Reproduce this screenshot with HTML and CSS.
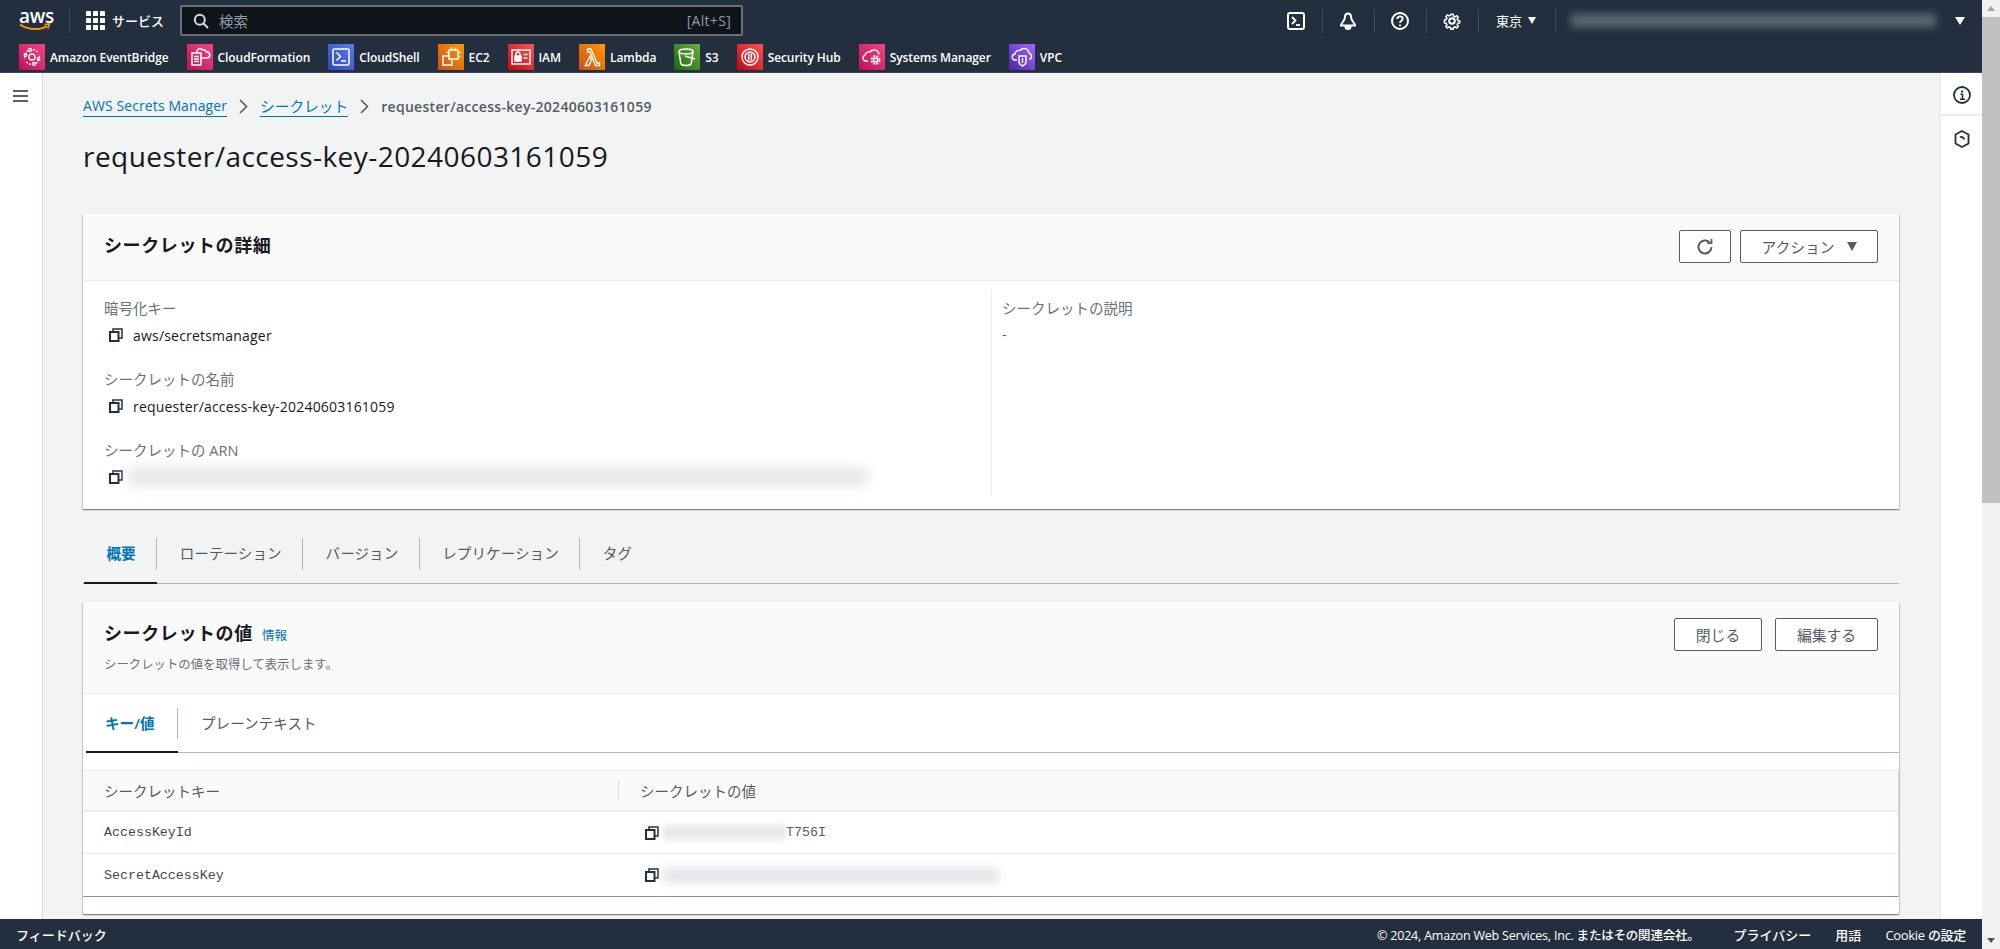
FILE: index.html
```html
<!DOCTYPE html>
<html lang="ja">
<head>
  <meta charset="UTF-8" />
  <title>requester/access-key-20240603161059 | Secrets Manager</title>
  <link rel="stylesheet" href="styles.css">
</head>
<body>
  <svg class="sprites" width="0" height="0">
    <defs>
      <linearGradient id="g-pink" x1="0" y1="1" x2="1" y2="0"><stop offset="0" stop-color="#bc1356"/><stop offset="1" stop-color="#f34482"/></linearGradient>
      <linearGradient id="g-blue" x1="0" y1="1" x2="1" y2="0"><stop offset="0" stop-color="#2e46b9"/><stop offset="1" stop-color="#5a7bf0"/></linearGradient>
      <linearGradient id="g-orange" x1="0" y1="1" x2="1" y2="0"><stop offset="0" stop-color="#c8511b"/><stop offset="1" stop-color="#ff9900"/></linearGradient>
      <linearGradient id="g-red" x1="0" y1="1" x2="1" y2="0"><stop offset="0" stop-color="#bd0816"/><stop offset="1" stop-color="#ff5252"/></linearGradient>
      <linearGradient id="g-green" x1="0" y1="1" x2="1" y2="0"><stop offset="0" stop-color="#1b660f"/><stop offset="1" stop-color="#6cae3e"/></linearGradient>
      <linearGradient id="g-purple" x1="0" y1="1" x2="1" y2="0"><stop offset="0" stop-color="#4d27a8"/><stop offset="1" stop-color="#a166ff"/></linearGradient>
      <symbol id="i-copy" viewBox="0 0 14 14">
        <path d="M4 3V1h9v9h-3" fill="none" stroke="currentColor" stroke-width="1.5"/>
        <rect x="1" y="4" width="8.5" height="9" fill="none" stroke="currentColor" stroke-width="2"/>
      </symbol>
    </defs>
  </svg>

  <div class="window">
    <div class="app">
      <header class="topbar">
        <div class="topbar-main">
          <div class="aws-logo">
            <span class="aws-word">aws</span>
            <svg class="aws-smile" width="32" height="9" viewBox="0 0 32 9"><path d="M1 1.500C9 7 21 7.500 28 3" fill="none" stroke="#f90" stroke-width="2"/><path d="M25.500 1.500l5-.5-1.800 4.600" fill="none" stroke="#f90" stroke-width="1.600"/></svg>
          </div>
          <span class="bar-sep first"></span>
          <div class="services">
            <svg width="19" height="19" viewBox="0 0 19 19" fill="#fff"><rect width="5" height="5" rx=".6"/><rect x="7" width="5" height="5" rx=".6"/><rect x="14" width="5" height="5" rx=".6"/><rect y="7" width="5" height="5" rx=".6"/><rect x="7" y="7" width="5" height="5" rx=".6"/><rect x="14" y="7" width="5" height="5" rx=".6"/><rect y="14" width="5" height="5" rx=".6"/><rect x="7" y="14" width="5" height="5" rx=".6"/><rect x="14" y="14" width="5" height="5" rx=".6"/></svg>
            <span>サービス</span>
          </div>
          <div class="search">
            <svg width="16" height="16" viewBox="0 0 16 16" fill="none" stroke="#d5dbdb" stroke-width="2"><circle cx="6.800" cy="6.800" r="5"/><path d="M10.500 10.500L15 15"/></svg>
            <span class="search-text">検索</span>
            <span class="search-key">[Alt+S]</span>
          </div>
          <div class="bar-tools">
            <svg class="tool" width="18" height="18" viewBox="0 0 18 18"><rect x="1" y="1" width="16" height="16" rx="2" fill="none" stroke="#fff" stroke-width="2"/><path d="M5 5l3.500 3.500L5 12" fill="none" stroke="#fff" stroke-width="1.800"/><path d="M9 13h4" stroke="#fff" stroke-width="1.800"/></svg>
            <span class="bar-sep"></span>
            <svg class="tool" width="18" height="18" viewBox="0 0 18 18" fill="none" stroke="#fff" stroke-width="2"><path d="M9 1.500c2 0 3 1.500 3 3.500 0 3.500 4 6 4 8.500H2c0-2.500 4-5 4-8.500 0-2 1-3.500 3-3.500z"/><path d="M6.500 14.500c0 1.500 1.200 2.500 2.500 2.500s2.500-1 2.500-2.500z" fill="#fff"/></svg>
            <span class="bar-sep"></span>
            <svg class="tool" width="18" height="18" viewBox="0 0 18 18" fill="none" stroke="#fff"><circle cx="9" cy="9" r="8" stroke-width="2"/><path d="M6.300 7c0-1.600 1.200-2.600 2.700-2.600s2.700 1 2.700 2.400c0 2-2.700 2-2.700 4.200" stroke-width="1.800"/><path d="M9 12.400v1.800" stroke-width="1.800"/></svg>
            <span class="bar-sep"></span>
            <svg class="tool" width="18" height="18" viewBox="0 0 18 18" fill="none" stroke="#fff"><circle cx="9" cy="9" r="2.800" stroke-width="2"/><path d="M7.700 1.200h2.600l.4 2.100 1.900.8 1.800-1.200 1.800 1.800-1.200 1.800.8 1.900 2 .4v2.400l-2 .4-.8 1.900 1.200 1.800-1.800 1.800-1.800-1.200-1.900.8-.4 2H7.700l-.4-2-1.900-.8-1.800 1.200-1.800-1.800 1.200-1.800-.8-1.900-2-.4V7.800l2-.4.8-1.900-1.200-1.800 1.800-1.800 1.800 1.200 1.900-.8z" stroke-width="1.800" transform="translate(1.300 1.300) scale(.86)"/></svg>
            <span class="bar-sep"></span>
            <div class="region">東京<span class="tri"></span></div>
            <span class="bar-sep"></span>
            <div class="account-blur"></div>
            <span class="tri account-tri"></span>
          </div>
        </div>
        <nav class="favorites">
          <a class="fav"><svg width="26" height="26" viewBox="0 0 26 26"><rect width="26" height="26" fill="url(#g-pink)"/><g fill="none" stroke="#fff" stroke-width="1.300"><circle cx="13" cy="13" r="3"/><path d="M9 6.500a8 8 0 0 0-3 9M17 19.500a8 8 0 0 0 3-9M14 5.500a8 8 0 0 1 5 3M12 20.500a8 8 0 0 1-5-3" stroke-dasharray="2 1.300"/><circle cx="11" cy="6" r="1.500"/><circle cx="15" cy="20" r="1.500"/><circle cx="6.500" cy="11" r="1.300"/><circle cx="19.500" cy="15" r="1.300"/></g></svg><span>Amazon EventBridge</span></a>
          <a class="fav"><svg width="26" height="26" viewBox="0 0 26 26"><rect width="26" height="26" fill="url(#g-pink)"/><g fill="none" stroke="#fff" stroke-width="1.500"><rect x="5" y="9" width="9" height="12"/><path d="M7 12.500h5M7 15h5M7 17.500h5"/><path d="M10 9V7.500a3 3 0 0 1 5.500-1.500 3 3 0 0 1 4 2 3 3 0 0 1 .5 6H14"/></g></svg><span>CloudFormation</span></a>
          <a class="fav"><svg width="26" height="26" viewBox="0 0 26 26"><rect width="26" height="26" fill="url(#g-blue)"/><g fill="none" stroke="#fff" stroke-width="1.500"><rect x="5" y="5" width="16" height="16" rx="1.500"/><path d="M8.500 8.500l4 4-4 4"/><path d="M13 17h5"/></g></svg><span>CloudShell</span></a>
          <a class="fav"><svg width="26" height="26" viewBox="0 0 26 26"><rect width="26" height="26" fill="url(#g-orange)"/><g fill="none" stroke="#fff" stroke-width="1.500"><rect x="11" y="6" width="9" height="9"/><path d="M13.500 3.500V6M17.500 3.500V6M13.500 15v2M20 8.500h2.500M20 12.500h2.500M8.500 8.500H11"/><path d="M11 12H5v9h9v-4"/></g></svg><span>EC2</span></a>
          <a class="fav"><svg width="26" height="26" viewBox="0 0 26 26"><rect width="26" height="26" fill="url(#g-red)"/><g fill="none" stroke="#fff" stroke-width="1.500"><rect x="4" y="6" width="18" height="14"/><rect x="7" y="12" width="6" height="5" fill="#fff"/><path d="M8 12v-2a2 2 0 0 1 4 0v2M15.500 10.500h4M15.500 14h4"/></g></svg><span>IAM</span></a>
          <a class="fav"><svg width="26" height="26" viewBox="0 0 26 26"><rect width="26" height="26" fill="url(#g-orange)"/><path d="M8.500 5H12l6 14h2.500v2.500h-4L11 8H8.500zM11 12.500l1.500 3.200L10 21.500H6.200z" fill="none" stroke="#fff" stroke-width="1.300"/></svg><span>Lambda</span></a>
          <a class="fav"><svg width="26" height="26" viewBox="0 0 26 26"><rect width="26" height="26" fill="url(#g-green)"/><g fill="none" stroke="#fff" stroke-width="1.500"><ellipse cx="12" cy="7.500" rx="7" ry="2.500"/><path d="M5 7.500l1.800 12c.3 1.200 2.500 2 5.200 2s4.900-.8 5.200-2L19 7.500"/><path d="M11 12l10 3"/></g></svg><span>S3</span></a>
          <a class="fav"><svg width="26" height="26" viewBox="0 0 26 26"><rect width="26" height="26" fill="url(#g-red)"/><g fill="none" stroke="#fff" stroke-width="1.500"><circle cx="13" cy="13" r="8"/><circle cx="13" cy="13" r="5"/><path d="M11.700 9.500v7M14.300 9.500v7"/></g></svg><span>Security Hub</span></a>
          <a class="fav"><svg width="26" height="26" viewBox="0 0 26 26"><rect width="26" height="26" fill="url(#g-pink)"/><g fill="none" stroke="#fff" stroke-width="1.400"><path d="M9 17H7a3 3 0 0 1-1-5.800 4 4 0 0 1 5-3.200 5 5 0 0 1 9 2.500"/><circle cx="16.500" cy="16" r="2"/><circle cx="16.500" cy="16" r="4" stroke-dasharray="2 1.200" stroke-width="1.800"/></g></svg><span>Systems Manager</span></a>
          <a class="fav"><svg width="26" height="26" viewBox="0 0 26 26"><rect width="26" height="26" fill="url(#g-purple)"/><g fill="none" stroke="#fff" stroke-width="1.400"><path d="M8 16H6.500a3 3 0 0 1-.5-6 4 4 0 0 1 5-3.500 5 5 0 0 1 9 2.500 3.500 3.500 0 0 1 .5 6.500"/><path d="M10 12h7v6c0 2-1.500 3-3.500 4-2-1-3.500-2-3.500-4z"/><path d="M13.500 14v5"/></g></svg><span>VPC</span></a>
        </nav>
      </header>

      <div class="middle">
        <aside class="left-nav">
          <svg width="15" height="12" viewBox="0 0 15 12"><path d="M0 1h15M0 6h15M0 11h15" stroke="#232f3e" stroke-width="1.600"/></svg>
        </aside>

        <main class="content">
          <div class="breadcrumbs">
            <a class="crumb">AWS Secrets Manager</a>
            <svg class="chev" width="9" height="15" viewBox="0 0 9 15"><path d="M1 1l6.500 6.500L1 14" fill="none" stroke="#545b64" stroke-width="1.600"/></svg>
            <a class="crumb crumb-ja">シークレット</a>
            <svg class="chev" width="9" height="15" viewBox="0 0 9 15"><path d="M1 1l6.500 6.500L1 14" fill="none" stroke="#545b64" stroke-width="1.600"/></svg>
            <span class="crumb-current">requester/access-key-20240603161059</span>
          </div>
          <h1 class="page-title">requester/access-key-20240603161059</h1>

          <section class="card details">
            <div class="card-head">
              <h2>シークレットの詳細</h2>
              <div class="actions">
                <button class="btn btn-refresh"><svg width="18" height="18" viewBox="0 0 18 18" fill="none" stroke="#545b64" stroke-width="2"><path d="M15.500 9a6.500 6.500 0 1 1-2-4.700"/><path d="M15.500 1v4.200h-4.200" stroke-width="1.800"/></svg></button>
                <button class="btn btn-action">アクション<span class="tri-dark"></span></button>
              </div>
            </div>
            <div class="detail-grid">
              <div class="detail-col">
                <div class="field">
                  <div class="field-label">暗号化キー</div>
                  <div class="field-value"><svg class="copy"><use href="#i-copy"/></svg>aws/secretsmanager</div>
                </div>
                <div class="field">
                  <div class="field-label">シークレットの名前</div>
                  <div class="field-value"><svg class="copy"><use href="#i-copy"/></svg>requester/access-key-20240603161059</div>
                </div>
                <div class="field">
                  <div class="field-label">シークレットの ARN</div>
                  <div class="field-value"><svg class="copy"><use href="#i-copy"/></svg><div class="redact redact-arn"></div></div>
                </div>
              </div>
              <div class="detail-col right">
                <div class="field">
                  <div class="field-label">シークレットの説明</div>
                  <div class="field-value plain">-</div>
                </div>
              </div>
            </div>
          </section>

          <div class="tabs page-tabs">
            <a class="tab active">概要</a>
            <a class="tab">ローテーション</a>
            <a class="tab">バージョン</a>
            <a class="tab">レプリケーション</a>
            <a class="tab last">タグ</a>
          </div>

          <section class="card secret">
            <div class="card-head tall">
              <div>
                <h2>シークレットの値 <a class="info">情報</a></h2>
                <p class="card-desc">シークレットの値を取得して表示します。</p>
              </div>
              <div class="actions wide">
                <button class="btn btn-close">閉じる</button>
                <button class="btn btn-edit">編集する</button>
              </div>
            </div>
            <div class="tabs inner-tabs">
              <a class="tab active">キー/値</a>
              <a class="tab last">プレーンテキスト</a>
            </div>
            <div class="kv-table">
              <div class="kv-row kv-head">
                <div class="kv-key">シークレットキー</div>
                <div class="kv-val">シークレットの値</div>
              </div>
              <div class="kv-row">
                <div class="kv-key mono">AccessKeyId</div>
                <div class="kv-val"><svg class="copy"><use href="#i-copy"/></svg><div class="redact redact-id"></div><span class="mono">T756I</span></div>
              </div>
              <div class="kv-row">
                <div class="kv-key mono">SecretAccessKey</div>
                <div class="kv-val"><svg class="copy"><use href="#i-copy"/></svg><div class="redact redact-secret"></div></div>
              </div>
            </div>
          </section>
        </main>

        <aside class="right-rail">
          <div class="rail-item">
            <svg width="18" height="18" viewBox="0 0 18 18" fill="none" stroke="#232f3e"><circle cx="9" cy="9" r="8" stroke-width="1.800"/><path d="M7.500 8.200H9.500V13M7 13.200h5" stroke-width="1.600"/><path d="M9 4.500v2" stroke-width="2"/></svg>
          </div>
          <div class="rail-item">
            <svg width="16" height="18" viewBox="0 0 16 18" fill="none" stroke="#232f3e"><path d="M8 1l6.500 3.500v9L8 17l-6.500-3.500v-9z" stroke-width="1.800"/><path d="M6 7.500a2 2 0 0 1 3 0l1.500 2" stroke-width="1.800"/></svg>
          </div>
        </aside>
      </div>

      <footer class="footer">
        <a>フィードバック</a>
        <div class="footer-right">
          <span class="copyright">© 2024, Amazon Web Services, Inc. またはその関連会社。</span>
          <a>プライバシー</a>
          <a>用語</a>
          <a class="cookie">Cookie の設定</a>
        </div>
      </footer>
    </div>

    <div class="scrollbar">
      <span class="sb-up"></span>
      <div class="sb-track"><div class="sb-thumb"></div></div>
      <span class="sb-down"></span>
    </div>
  </div>
</body>
</html>
```

FILE: styles.css
```css
* {
  box-sizing: border-box;
}
html, body {
  margin: 0;
  height: 100%;
  overflow: hidden;
}
body {
  font-family: "Open Sans", "Noto Sans CJK JP", sans-serif;
  font-size: 14px;
  color: #16191f;
  background: #f2f3f3;
}
h1, h2, p {
  margin: 0;
}
.sprites {
  position: absolute;
}
.window {
  display: flex;
  height: 949px;
}
.app {
  width: 1982px;
  display: flex;
  flex-direction: column;
}

/* top navigation */
.topbar {
  height: 73px;
  background: #232f3e;
  color: #fff;
  border-bottom: 1px solid #3b4653;
}
.topbar-main {
  height: 41px;
  display: flex;
  align-items: center;
  padding-left: 19px;
}
.aws-logo {
  width: 32px;
  height: 24px;
  margin-top: -1px;
}
.aws-word {
  display: block;
  font-size: 19px;
  font-weight: 600;
  line-height: 16px;
  text-align: center;
  letter-spacing: -.3px;
}
.aws-smile {
  display: block;
  margin-top: -1px;
}
.bar-sep {
  width: 1px;
  height: 24px;
  background: #414d5c;
}
.bar-sep.first {
  margin-left: 18px;
}
.services {
  display: flex;
  align-items: center;
  gap: 7px;
  margin-left: 16px;
  font-size: 13px;
  font-weight: 500;
}
.search {
  width: 563px;
  height: 31px;
  margin-left: 16px;
  display: flex;
  align-items: center;
  padding: 0 10px 0 11px;
  background: #0f141a;
  border: 2px solid #687078;
  border-radius: 2px;
  font-size: 14px;
  color: #8d9da7;
}
.search-text {
  margin-left: 10px;
  flex: 1;
  font-size: 14.500px;
}
.search-key {
  letter-spacing: .3px;
}
.bar-tools {
  margin-left: 544px;
  display: flex;
  align-items: center;
}
.bar-tools .bar-sep {
  margin: 0 16.500px;
}
.region {
  display: flex;
  align-items: center;
  gap: 6px;
  width: 41px;
  margin-left: 1px;
  font-size: 13px;
  white-space: nowrap;
}
.bar-tools .region + .bar-sep {
  margin-left: 18px;
  margin-right: 15px;
}
.tri {
  width: 0;
  height: 0;
  border-left: 4.500px solid transparent;
  border-right: 4.500px solid transparent;
  border-top: 7px solid #fff;
}
.account-blur {
  width: 365px;
  height: 13px;
  background: #66707c;
  filter: blur(4px);
  opacity: .9;
}
.account-tri {
  margin-left: 19px;
  border-left-width: 5px;
  border-right-width: 5px;
  border-top-width: 8px;
}

/* favorites */
.favorites {
  height: 31px;
  display: flex;
  align-items: flex-start;
  padding: 3px 0 0 19px;
  gap: 18px;
}
.fav {
  display: flex;
  align-items: center;
  gap: 5px;
  height: 26px;
  font-size: 12px;
  font-weight: 600;
  letter-spacing: -.08px;
  white-space: nowrap;
}

/* layout */
.middle {
  flex: 1;
  min-height: 0;
  display: flex;
}
.left-nav {
  width: 43px;
  background: #fff;
  border-right: 1px solid #d5dbdb;
  padding: 17px 0 0 13px;
}
.left-nav svg {
  display: block;
}
.content {
  flex: 1;
  min-width: 0;
  padding: 0 40px;
  overflow: hidden;
}
.right-rail {
  width: 43px;
  background: #fff;
  border-left: 2px solid #eaeded;
}
.rail-item {
  height: 43px;
  padding-top: 2px;
  display: flex;
  align-items: center;
  justify-content: center;
  border-bottom: 2px solid #eaeded;
}
.rail-item:last-child {
  border-bottom: 0;
}

/* page heading */
.breadcrumbs {
  height: 34px;
  margin-top: 16px;
  display: flex;
  align-items: center;
}
.crumb {
  color: #0073bb;
  border-bottom: 1px solid #0073bb;
  line-height: 20px;
  letter-spacing: .1px;
}
.crumb-ja {
  font-size: 14.700px;
  letter-spacing: 0;
}
.chev {
  margin: 0 12px;
}
.crumb-current {
  color: #545b64;
  font-weight: 600;
  font-size: 14px;
  letter-spacing: .3px;
}
.page-title {
  margin-top: 13px;
  font-size: 28px;
  font-weight: 400;
  line-height: 40px;
  letter-spacing: .45px;
}

/* cards */
.card {
  background: #fff;
  box-shadow: 0 1px 1px 0 rgba(0, 28, 36, .3), 1px 1px 1px 0 rgba(0, 28, 36, .15), -1px 1px 1px 0 rgba(0, 28, 36, .15);
}
.details {
  margin-top: 38px;
  height: 295px;
}
.card-head {
  height: 67px;
  background: #fafafa;
  border-bottom: 1px solid #eaeded;
  padding: 16px 21px;
  display: flex;
  justify-content: space-between;
  align-items: flex-start;
}
.card-head h2 {
  font-size: 18px;
  font-weight: 700;
  line-height: 30px;
  letter-spacing: .6px;
}
.card-head.tall {
  height: 92px;
}
.actions {
  display: flex;
  gap: 9px;
}
.actions.wide {
  gap: 13px;
}
.btn {
  height: 33px;
  padding: 0;
  background: #fff;
  border: 1px solid #545b64;
  border-radius: 2px;
  font: inherit;
  font-size: 14.800px;
  color: #545b64;
  display: flex;
  align-items: center;
  justify-content: center;
}
.btn-refresh {
  width: 52px;
}
.btn-action {
  width: 138px;
  gap: 12px;
}
.tri-dark {
  width: 0;
  height: 0;
  border-left: 5.500px solid transparent;
  border-right: 5.500px solid transparent;
  border-top: 9px solid #545b64;
}
.btn-close {
  width: 88px;
}
.btn-edit {
  width: 103px;
}
.detail-grid {
  display: flex;
  padding-top: 9px;
}
.detail-col {
  width: 887px;
  height: 205px;
  margin-left: 21px;
  padding-top: 9px;
}
.detail-col.right {
  width: auto;
  margin-left: 0;
  padding-left: 10px;
  border-left: 1px solid #eaeded;
}
.field {
  height: 71px;
}
.field-label {
  color: #687078;
  font-size: 14.500px;
  line-height: 20px;
}
.field-value {
  display: flex;
  align-items: center;
  height: 26px;
  margin-top: 3px;
  font-size: 14px;
  letter-spacing: .2px;
}
.field-value.plain {
  margin-top: 2px;
  color: #545b64;
}
.copy {
  width: 14px;
  height: 14px;
  color: #232f3e;
  margin: 0 10px 0 5px;
  flex: none;
}
.redact {
  background: #d5d9dc;
  filter: blur(5px);
}
.redact-arn {
  width: 738px;
  height: 16px;
  margin-left: -4px;
  background: #dfe2e5;
  filter: blur(7px);
}
.redact-id {
  width: 123px;
  height: 15px;
  margin-left: -2px;
  opacity: .6;
  filter: blur(3px);
}
.redact-secret {
  width: 335px;
  height: 15px;
  margin-left: -2px;
  opacity: .7;
}

/* tabs */
.tabs {
  display: flex;
  height: 49px;
  border-bottom: 1px solid #aab7b8;
  font-size: 14.600px;
  color: #545b64;
}
.page-tabs {
  margin-top: 26px;
  margin-bottom: 18px;
  padding-left: 1px;
}
.tab {
  position: relative;
  display: flex;
  align-items: center;
  height: 48px;
  padding: 0 21.500px 0 22.500px;
}
.tab::after {
  content: "";
  position: absolute;
  right: 0;
  top: 3px;
  bottom: 13px;
  width: 1px;
  background: #aab7b8;
}
.page-tabs .tab {
  padding-bottom: 13px;
}
.tab.last::after {
  display: none;
}
.tab.active {
  color: #0073bb;
  font-weight: 600;
}
.tab.active::before {
  content: "";
  position: absolute;
  left: 0;
  right: 0;
  bottom: -1px;
  height: 2px;
  background: #16191f;
}
.info {
  color: #0073bb;
  font-size: 12.500px;
  font-weight: 400;
  margin-left: 4px;
  letter-spacing: 0;
}
.card-desc {
  font-size: 12.400px;
  color: #687078;
  line-height: 18px;
  margin-top: 5px;
}
.inner-tabs {
  height: 59px;
  margin-left: 3px;
}
.inner-tabs .tab {
  height: 58px;
  padding-bottom: 2px;
}
.inner-tabs .tab.active {
  padding: 0 24px 2px 19px;
}
.inner-tabs .tab::after {
  top: 14px;
  bottom: 13px;
}

/* key/value table */
.secret {
  padding-bottom: 17px;
}
.kv-table {
  margin-top: 17px;
  border-top: 1px solid #eaeded;
  border-bottom: 1px solid #879596;
  border-right: 1px solid #d5dbdb;
}
.kv-row {
  display: flex;
  align-items: center;
  height: 43px;
  border-top: 1px solid #eaeded;
}
.kv-row:nth-child(2) {
  border-top: 2px solid #eaeded;
}
.kv-head {
  height: 39px;
  border-top: 0;
  background: #fafafa;
  color: #545b64;
  font-size: 14.500px;
}
.kv-key {
  width: 535px;
  padding-left: 21px;
  flex: none;
}
.kv-val {
  display: flex;
  align-items: center;
  padding-left: 21px;
}
.kv-head .kv-val {
  border-left: 1px solid #d5dbdb;
  height: 21px;
}
.kv-val .copy {
  margin-left: 6px;
  margin-right: 6px;
}
.mono {
  font-family: "Liberation Mono", monospace;
  font-size: 13.300px;
  color: #545b64;
}
.kv-key.mono {
  color: #414750;
}

/* footer */
.footer {
  height: 30px;
  flex: none;
  background: #232f3e;
  color: #fff;
  font-size: 13px;
  font-weight: 500;
  display: flex;
  align-items: center;
  justify-content: space-between;
  padding: 0 16px;
}
.footer-right {
  display: flex;
  gap: 24px;
}
.copyright {
  margin-right: 10px;
  font-size: 12.500px;
  letter-spacing: -.2px;
}
.cookie {
  letter-spacing: -.3px;
}

/* window scrollbar */
.scrollbar {
  width: 18px;
  background: #f1f1f1;
  display: flex;
  flex-direction: column;
  align-items: center;
}
.sb-up, .sb-down {
  flex: none;
  width: 0;
  height: 0;
  border-left: 4px solid transparent;
  border-right: 4px solid transparent;
  margin: 6px 0;
}
.sb-up {
  border-bottom: 5px solid #a3a3a3;
}
.sb-down {
  border-top: 5px solid #505050;
}
.sb-track {
  flex: 1;
  width: 100%;
}
.sb-thumb {
  height: 486px;
  background: #c1c1c1;
}
```
